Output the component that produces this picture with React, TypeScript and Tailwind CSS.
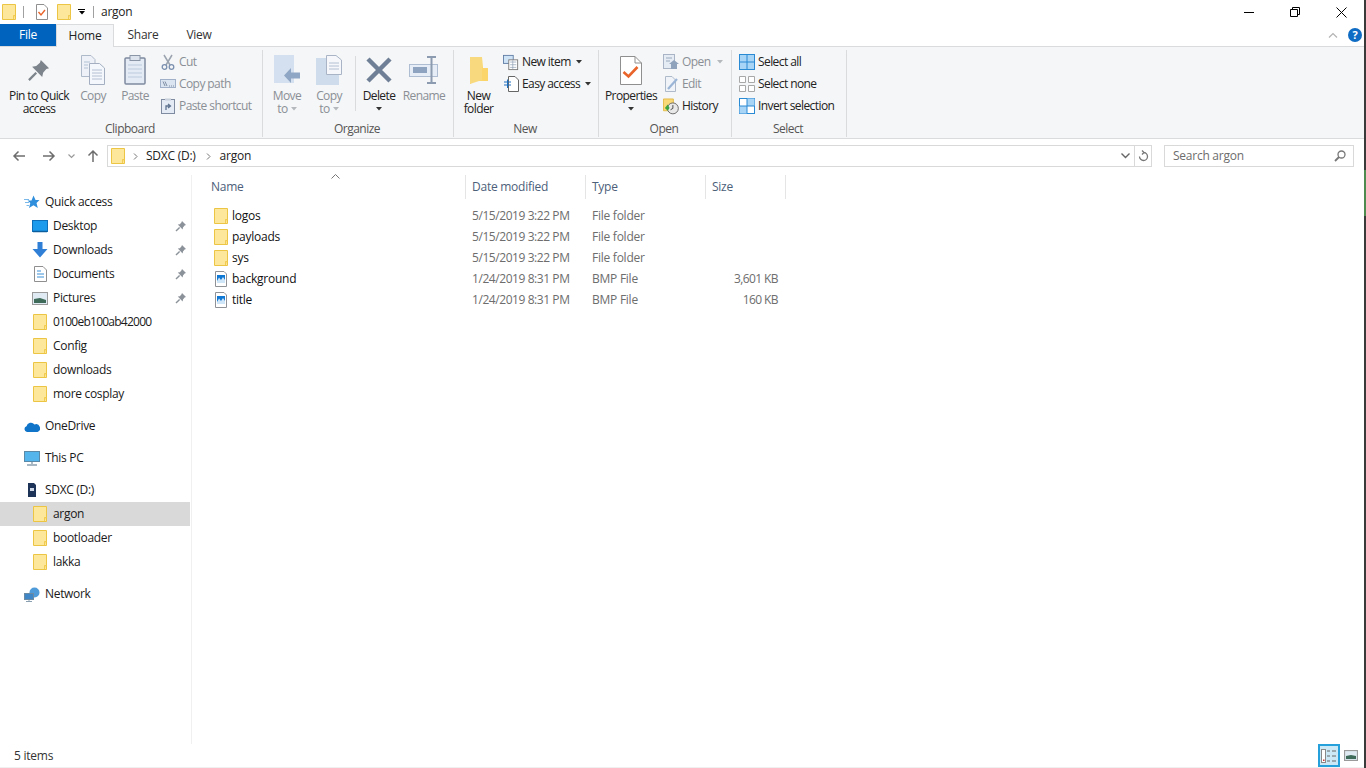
import React from "react";

const Folder = ({ s = 16 }: { s?: number }) => (
  <svg width={s} height={s} viewBox="0 0 16 16" className="shrink-0">
    <path d="M1.500 .5H14.500V15.500H1.500Z" fill="#fde79b" stroke="#edc544" />
    <path d="M12.500 15V11.500H14.500" fill="#fbdc78" stroke="#edc544" strokeWidth=".8" />
  </svg>
);

const Pin = () => (
  <svg width="12" height="12" viewBox="0 0 12 12" className="shrink-0">
    <path d="M7 1L11 5L9.600 5.600L8 7.400L7.600 9.400L2.800 4.600L4.800 4.200L6.400 2.400Z" fill="#8c9299" />
    <path d="M4.600 7.400L1 11" stroke="#8c9299" strokeWidth="1.400" />
  </svg>
);

const Bmp = () => (
  <svg width="16" height="16" viewBox="0 0 16 16" className="shrink-0">
    <path d="M2.500 .5H11L13.500 3V15.500H2.500Z" fill="#fff" stroke="#8f9398" />
    <rect x="4" y="4" width="8" height="8" fill="#0f78d4" />
    <path d="M4 10L6 6.500L8 9L10 6L12 9V12H4Z" fill="#cfe6f8" />
  </svg>
);

const Row = ({ name, date, type, size, bmp }: { name: string; date: string; type: string; size?: string; bmp?: boolean }) => (
  <div className="h-[21px] flex items-center text-[12px] leading-[21px]">
    <div className="w-[265px] pl-[13px] flex items-center gap-[3px] text-[#111]">
      {bmp ? <Bmp /> : <Folder />}
      <span>{name}</span>
    </div>
    <div className="w-[120px] pl-[7px] text-[#6d6d6d] tracking-[-0.43px]">{date}</div>
    <div className="w-[120px] pl-[7px] text-[#6d6d6d]">{type}</div>
    <div className="w-[73px] text-right text-[#6d6d6d] tracking-[-0.6px]">{size}</div>
  </div>
);

const Nav = ({ icon, label, sub, pin, active, mt, tight }: { icon: React.ReactNode; label: string; sub?: boolean; pin?: boolean; active?: boolean; mt?: boolean; tight?: boolean }) => (
  <div className={`h-[24px] w-[190px] flex items-center text-[12px] text-[#1a1a1a] gap-[5px] ${sub ? "pl-[32px]" : "pl-[24px]"} ${active ? "bg-[#d9d9d9]" : ""} ${mt ? "mt-[8px]" : ""}`}>
    <span className="w-[16px] h-[16px] flex items-center justify-center shrink-0">{icon}</span>
    <span className={`flex-1 ${tight ? "tracking-[-0.75px]" : "tracking-[-0.32px]"}`}>{label}</span>
    {pin && <span className="mr-[3px]"><Pin /></span>}
  </div>
);

const Caret = ({ c = "#333" }: { c?: string }) => (
  <svg width="6" height="4" viewBox="0 0 6 4" className="inline-block shrink-0"><path d="M0 0H6L3 3.500Z" fill={c} /></svg>
);

const Big = ({ w, icon, l1, l2, dim, caret, caretDim }: { w: number; icon: React.ReactNode; l1: string; l2?: string; dim?: boolean; caret?: boolean; caretDim?: boolean }) => (
  <div style={{ width: w }} className={`shrink-0 flex flex-col items-center text-[12px] leading-[13px] tracking-[-0.6px] ${dim ? "text-[#8a8f96]" : "text-[#222]"}`}>
    <div className="h-[36px] mt-[2px] flex items-center justify-center">{icon}</div>
    <div className="mt-[1px] whitespace-nowrap">{l1}</div>
    {l2 && (
      <div className="whitespace-nowrap flex items-center gap-[3px]">
        {l2}
        {caretDim && <Caret c="#b5b8bc" />}
      </div>
    )}
    {caret && <div className="h-[13px] flex items-center"><Caret /></div>}
  </div>
);

const Small = ({ icon, label, dim, caret, caretDim }: { icon: React.ReactNode; label: string; dim?: boolean; caret?: boolean; caretDim?: boolean }) => (
  <div className={`h-[22px] flex items-center gap-[3px] text-[12px] tracking-[-0.58px] whitespace-nowrap ${dim ? "text-[#8a8f96]" : "text-[#222]"}`}>
    <span className="w-[16px] h-[16px] flex items-center justify-center shrink-0">{icon}</span>
    <span>{label}</span>
    {caret && <span className="ml-[2px] flex"><Caret /></span>}
    {caretDim && <span className="ml-[4px] flex"><Caret c="#b5b8bc" /></span>}
  </div>
);

const Group = ({ w, label, children }: { w: number; label: string; children: React.ReactNode }) => (
  <div style={{ width: w }} className="shrink-0 h-[87px] border-r border-[#dadbdc] flex flex-col">
    <div className="h-[71px] flex">{children}</div>
    <div className="text-center text-[12px] leading-[16px] text-[#555] tracking-[-0.5px] pr-[2px]">{label}</div>
  </div>
);

const Check = () => (
  <svg width="22" height="29" viewBox="0 0 22 29">
    <path d="M.5 .5H15L21.500 7V28.500H.5Z" fill="#fff" stroke="#8f8f8f" />
    <path d="M15 .5V7H21.500" fill="none" stroke="#8f8f8f" />
    <path d="M3.500 16L8.500 20.500L17.500 11" fill="none" stroke="#e9642a" strokeWidth="2.600" />
  </svg>
);

const Pages = () => (
  <svg width="26" height="30" viewBox="0 0 26 30">
    <path d="M1.500 .5H11L15 4.500V21.500H1.500Z" fill="#eef2f8" stroke="#aeb9c9" />
    <path d="M9.500 8.500H19.500L24.500 13V29.500H9.500Z" fill="#f4f7fb" stroke="#a4b0c2" />
    <path d="M4 7H10M4 10H8M4 13H8M12 15H22M12 18H22M12 21H22M12 24H22" stroke="#b3c0d4" />
  </svg>
);

const FolderPages = () => (
  <svg width="26" height="30" viewBox="0 0 26 30">
    <rect x="0" y="3" width="23" height="27" fill="#cfdcec" />
    <path d="M10.500 .5H20L25.500 5V19.500H10.500Z" fill="#f5f7fb" stroke="#a9b5c6" />
    <path d="M13 8H23M13 11H23M13 14H23" stroke="#b3c0d4" />
  </svg>
);

export default function App() {
  return (
    <div className="w-[1366px] h-[768px] flex overflow-hidden bg-white font-['Open_Sans','Noto_Sans',sans-serif] tracking-[-0.25px]">
      <div className="w-[1364px] h-[768px] relative flex flex-col shrink-0">
        {/* title bar */}
        <div className="h-[24px] flex items-center shrink-0">
          <span className="ml-[1px]"><Folder /></span>
          <span className="ml-[6px] w-px h-[12px] bg-[#a0a0a0]" />
          <span className="ml-[11px]">
            <svg width="14" height="16" viewBox="0 0 14 16"><path d="M1.500 .5H9L12.500 4V15.500H1.500Z" fill="#fff" stroke="#8f8f8f" /><path d="M3.500 8L6 11L10 6" fill="none" stroke="#e9642a" strokeWidth="1.400" /></svg>
          </span>
          <span className="ml-[7px]"><Folder /></span>
          <span className="ml-[6px] flex flex-col items-center gap-[1px]"><span className="w-[7px] h-px bg-black" /><Caret c="#000" /></span>
          <span className="ml-[8px] w-px h-[12px] bg-[#a0a0a0]" />
          <span className="ml-[7px] text-[12px] text-[#222]">argon</span>
          <div className="ml-auto flex items-center">
            <div className="w-[46px] flex justify-center"><span className="w-[10px] h-px bg-black" /></div>
            <div className="w-[46px] flex justify-center">
              <svg width="10" height="10" viewBox="0 0 10 10"><path d="M.5 2.500H7.500V9.500H.5ZM2.500 2.500V.5H9.500V7.500H7.500" fill="none" stroke="#000" /></svg>
            </div>
            <div className="w-[46px] flex justify-center">
              <svg width="11" height="11" viewBox="0 0 11 11"><path d="M.5 .5L10.500 10.500M10.500 .5L.5 10.500" stroke="#000" /></svg>
            </div>
          </div>
        </div>

        {/* tabs */}
        <div className="h-[23px] flex text-[12px] border-b border-[#dadbdc] shrink-0 relative">
          <div className="w-[56px] h-[22px] bg-[#0063be] text-white flex items-center justify-center">File</div>
          <div className="w-[58px] h-[23px] bg-[#f5f6f7] border-x border-t border-[#dadbdc] flex items-center justify-center text-[#222] z-10">Home</div>
          <div className="w-[58px] flex items-center justify-center text-[#333]">Share</div>
          <div className="w-[54px] flex items-center justify-center text-[#333]">View</div>
          <div className="ml-auto flex items-center gap-[10px] pr-[2px] h-[22px]">
            <svg width="10" height="6" viewBox="0 0 10 6"><path d="M1 5.500L5 1.500L9 5.500" fill="none" stroke="#b3b3b3" strokeWidth="1.200" /></svg>
            <span className="w-[14px] h-[14px] rounded-full bg-[#0f6cc4] text-white text-[11px] font-bold flex items-center justify-center">?</span>
          </div>
        </div>

        {/* ribbon */}
        <div className="h-[92px] bg-[#f5f6f7] border-b border-[#dadbdc] flex pt-[3px] shrink-0">
          <Group w={263} label="Clipboard">
            <Big w={78} l1="Pin to Quick" l2="access" icon={
              <svg width="22" height="22" viewBox="0 0 24 24"><path d="M14 1L23 10L20 11L16.500 15L15.500 19.500L4.500 8.500L9 7.500L13 4Z" fill="#7d848c" /><path d="M9 15L1 23" stroke="#7d848c" strokeWidth="2.500" /></svg>
            } />
            <Big w={30} dim l1="Copy" icon={<Pages />} />
            <Big w={54} dim l1="Paste" icon={
              <svg width="22" height="30" viewBox="0 0 22 30"><rect x="1" y="3" width="20" height="26" rx="1" fill="#e4ebf5" stroke="#7e8ba0" strokeWidth="1.500" /><rect x="6" y="0.500" width="10" height="5" fill="#dde3ec" stroke="#8a96a8" /><path d="M4 10H18M4 14H18M4 18H18M4 22H18" stroke="#bccade" /></svg>
            } />
            <div className="flex flex-col -ml-[2px] mt-[1px]">
              <Small dim label="Cut" icon={
                <svg width="14" height="16" viewBox="0 0 14 16"><path d="M3 1L9 11M11 1L5 11" stroke="#9aa3af" strokeWidth="1.500" /><circle cx="3.500" cy="13" r="2.300" fill="none" stroke="#7a90b0" strokeWidth="1.300" /><circle cx="10.500" cy="13" r="2.300" fill="none" stroke="#7a90b0" strokeWidth="1.300" /></svg>
              } />
              <Small dim label="Copy path" icon={
                <svg width="16" height="10" viewBox="0 0 16 10"><rect x=".5" y=".5" width="15" height="8" fill="#dbe4f1" stroke="#9fb0c8" /><path d="M3 2.500L5 7M5 2.500L7 7M9 7H10M11 7H12M13 7H14" stroke="#68788f" strokeWidth=".8" /></svg>
              } />
              <Small dim label="Paste shortcut" icon={
                <svg width="14" height="16" viewBox="0 0 14 16"><rect x=".5" y="1.500" width="13" height="14" fill="#e4ebf5" stroke="#7e8ba0" /><rect x="4" y=".5" width="6" height="2" fill="#c8d0db" /><path d="M5 12V8H9M7 6L9.500 8L7 10" fill="none" stroke="#5f7390" strokeWidth="1.300" /></svg>
              } />
            </div>
          </Group>

          <Group w={191} label="Organize">
            <Big w={48} dim l1="Move" l2="to" caretDim icon={
              <svg width="26" height="30" viewBox="0 0 26 30"><rect x="0" y="0" width="20" height="28" fill="#d4e0ef" /><path d="M10 20.500L17 13V17.500H26V23.500H17V28Z" fill="#8fa6c4" /></svg>
            } />
            <Big w={36} dim l1="Copy" l2="to" caretDim icon={<FolderPages />} />
            <div className="w-px h-[55px] bg-[#dadbdc] ml-[8px] mt-[6px]" />
            <Big w={46} l1="Delete" caret icon={
              <svg width="26" height="26" viewBox="0 0 26 26"><path d="M2 2L24 24M24 2L2 24" stroke="#6e7f96" strokeWidth="4.500" /></svg>
            } />
            <Big w={44} dim l1="Rename" icon={
              <svg width="30" height="28" viewBox="0 0 30 28"><rect x=".5" y="8.500" width="28" height="12" fill="#e6edf6" stroke="#aebdd1" /><rect x="4" y="11" width="14" height="6" fill="#8ea3bf" /><path d="M18 1H27M22.500 1V27M18 27H27" stroke="#8c9bb0" strokeWidth="2" /></svg>
            } />
          </Group>

          <Group w={145} label="New">
            <Big w={49} l1="New" l2="folder" icon={
              <svg width="20" height="28" viewBox="0 0 20 28"><path d="M1 1H13L14 12H19V25H5L1 28Z" fill="#fcd56a" /><path d="M1 1H13V24L1 28Z" fill="#f9d97e" /></svg>
            } />
            <div className="flex flex-col mt-[1px]">
              <Small label="New item" caret icon={
                <svg width="18" height="17" viewBox="0 0 18 17"><rect x=".5" y=".5" width="11" height="9" fill="#cfe3f6" stroke="#5d7ba3" /><rect x="6.500" y="5.500" width="10" height="11" fill="#fff" stroke="#777" /><path d="M8 8H15M8 11H15M8 14H15M11 6V16" stroke="#8ea0b5" strokeWidth=".8" /></svg>
              } />
              <Small label="Easy access" caret icon={
                <svg width="15" height="16" viewBox="0 0 15 16"><path d="M4.500 .5H11L14.500 4V15.500H4.500Z" fill="#fff" stroke="#666" /><path d="M0 6H7M0 9H7M3.500 3.500V12" stroke="#1f6fc0" strokeWidth="1" /></svg>
              } />
            </div>
          </Group>

          <Group w={133} label="Open">
            <Big w={64} l1="Properties" caret icon={<Check />} />
            <div className="flex flex-col mt-[1px]">
              <Small dim label="Open" caretDim icon={
                <svg width="16" height="16" viewBox="0 0 16 16"><rect x=".5" y=".5" width="11" height="14" fill="#e6ecf4" stroke="#a9b5c6" /><path d="M3 4H9M3 7H7" stroke="#9aa9bd" /><path d="M8 15V10H6L11 6L16 10H14V15Z" fill="#8fa3bd" /></svg>
              } />
              <Small dim label="Edit" icon={
                <svg width="15" height="16" viewBox="0 0 15 16"><path d="M1.500 .5H8L11.500 4V15.500H1.500Z" fill="#f0f4f9" stroke="#aeb9c9" /><path d="M4 13L13 3" stroke="#9bb5d6" strokeWidth="2.200" /></svg>
              } />
              <Small label="History" icon={
                <svg width="17" height="17" viewBox="0 0 17 17"><path d="M.5 .5H11V13H.5Z" fill="#f8d877" stroke="#e2bb45" /><circle cx="10.500" cy="10.500" r="5.800" fill="#e8e8e8" stroke="#666" /><path d="M10.500 7V10.500L8 12" stroke="#444" fill="none" /><path d="M2 10L5 6.500L7 10L5 13Z" fill="#3ea33e" /></svg>
              } />
            </div>
          </Group>

          <Group w={115} label="Select">
            <div className="flex flex-col ml-[7px] mt-[1px]">
              <Small label="Select all" icon={
                <svg width="16" height="16" viewBox="0 0 16 16"><rect x=".5" y=".5" width="15" height="15" fill="#a8d4f5" stroke="#2a8ad4" /><path d="M8 .5V15.500M.5 8H15.500" stroke="#2a8ad4" /></svg>
              } />
              <Small label="Select none" icon={
                <svg width="16" height="16" viewBox="0 0 16 16"><path d="M.5 .5H6.500V6.500H.5ZM9.500 .5H15.500V6.500H9.500ZM.5 9.500H6.500V15.500H.5ZM9.500 9.500H15.500V15.500H9.500Z" fill="#fff" stroke="#a8a8a8" /></svg>
              } />
              <Small label="Invert selection" icon={
                <svg width="16" height="16" viewBox="0 0 16 16"><rect x=".5" y=".5" width="15" height="15" fill="#fff" stroke="#2a8ad4" /><rect x="8" y=".5" width="7.500" height="7.500" fill="#a8d4f5" /><rect x=".5" y="8" width="7.500" height="7.500" fill="#a8d4f5" /><path d="M8 .5V15.500M.5 8H15.500" stroke="#2a8ad4" /></svg>
              } />
            </div>
          </Group>
        </div>

        {/* address row */}
        <div className="h-[34px] flex items-center shrink-0">
          <div className="w-[107px] flex items-center pl-[12px]">
            <svg width="14" height="12" viewBox="0 0 14 12"><path d="M13 6H2M6.500 1.500L2 6L6.500 10.500" fill="none" stroke="#6d6d6d" strokeWidth="1.500" /></svg>
            <svg className="ml-[16px]" width="14" height="12" viewBox="0 0 14 12"><path d="M1 6H12M7.500 1.500L12 6L7.500 10.500" fill="none" stroke="#6d6d6d" strokeWidth="1.500" /></svg>
            <svg className="ml-[12px]" width="7" height="5" viewBox="0 0 7 5"><path d="M.5 .5L3.500 3.500L6.500 .5" fill="none" stroke="#9a9a9a" strokeWidth="1.200" /></svg>
            <svg className="ml-[12px]" width="12" height="14" viewBox="0 0 12 14"><path d="M6 13V2M1.500 6.500L6 2L10.500 6.500" fill="none" stroke="#6d6d6d" strokeWidth="1.500" /></svg>
          </div>
          <div className="w-[1045px] h-[22px] border border-[#d9d9d9] flex items-center text-[12px] text-[#222]">
            <span className="ml-[2px]"><Folder /></span>
            <svg className="ml-[7px]" width="5" height="7" viewBox="0 0 5 7"><path d="M1 .5L4 3.500L1 6.500" fill="none" stroke="#777" /></svg>
            <span className="ml-[8px]">SDXC (D:)</span>
            <svg className="ml-[10px]" width="5" height="7" viewBox="0 0 5 7"><path d="M1 .5L4 3.500L1 6.500" fill="none" stroke="#777" /></svg>
            <span className="ml-[9px]">argon</span>
            <div className="ml-auto w-[17px] flex justify-center">
              <svg width="9" height="6" viewBox="0 0 9 6"><path d="M.5 .5L4.500 4.500L8.500 .5" fill="none" stroke="#666" strokeWidth="1.400" /></svg>
            </div>
            <div className="w-[17px] h-[20px] border-l border-[#d9d9d9] flex items-center justify-center">
              <svg width="11" height="12" viewBox="0 0 11 12"><path d="M5.500 2.500A4 4 0 1 1 1.500 6.500M4 .5L6 2.500L4 4.500" fill="none" stroke="#777" strokeWidth="1.300" /></svg>
            </div>
          </div>
          <div className="ml-[12px] w-[190px] h-[22px] border border-[#d9d9d9] flex items-center pl-[8px] text-[12px] text-[#6d6d6d]">
            <span>Search argon</span>
            <svg className="ml-auto mr-[7px]" width="12" height="12" viewBox="0 0 12 12"><circle cx="7.500" cy="4.500" r="3.500" fill="none" stroke="#777" strokeWidth="1.300" /><path d="M5 7L1 11" stroke="#777" strokeWidth="1.800" /></svg>
          </div>
        </div>

        {/* main */}
        <div className="flex-1 flex min-h-0">
          <div className="w-[192px] shrink-0 mt-[2px] pt-[15px] border-r border-[#f0f0f0]">
            <Nav label="Quick access" icon={<svg width="16" height="16" viewBox="0 0 16 16"><path d="M9.500 1.500L11.500 6H15.500L12.500 9L13.800 14L9.500 11.200L5 14L6.300 9L3.500 6.500H7.500Z" fill="#2f8fdc" /><path d="M0 5.500H5M1 8.500H5M2.500 11.500H5" stroke="#7ab8ea" /></svg>} />
            <Nav sub pin label="Desktop" icon={<svg width="16" height="13" viewBox="0 0 16 13"><rect x=".5" y=".5" width="15" height="11" fill="#1c9bec" stroke="#0e6fb8" /><path d="M1 11.500H15" stroke="#0b5d9c" strokeWidth="1.500" /></svg>} />
            <Nav sub pin label="Downloads" icon={<svg width="16" height="16" viewBox="0 0 16 16"><path d="M5.500 0H10.500V7H15.500L8 15.500L.5 7H5.500Z" fill="#2f7fd6" /></svg>} />
            <Nav sub pin label="Documents" icon={<svg width="13" height="16" viewBox="0 0 13 16"><path d="M.5 .5H9L12.500 4V15.500H.5Z" fill="#fff" stroke="#8f8f8f" /><path d="M3 5H7M3 8H10M3 11H10" stroke="#3a8fd6" /></svg>} />
            <Nav sub pin label="Pictures" icon={<svg width="16" height="13" viewBox="0 0 16 13"><rect x=".5" y=".5" width="15" height="12" fill="#dfeaf2" stroke="#9a9a9a" /><path d="M2 7L8 6L14 8V11H2Z" fill="#3e6b5a" /></svg>} />
            <Nav sub tight label="0100eb100ab42000" icon={<Folder />} />
            <Nav sub label="Config" icon={<Folder />} />
            <Nav sub label="downloads" icon={<Folder />} />
            <Nav sub label="more cosplay" icon={<Folder />} />
            <Nav mt label="OneDrive" icon={<svg width="16" height="11" viewBox="0 0 16 11"><path d="M3 11A3 3 0 0 1 2.500 5.200A4.500 4.500 0 0 1 10.500 3.500A3.500 3.500 0 0 1 13.500 11Z" fill="#1074c9" /></svg>} />
            <Nav mt label="This PC" icon={<svg width="16" height="15" viewBox="0 0 16 15"><rect x=".5" y=".5" width="15" height="10" fill="#53b5ec" stroke="#5a89a8" /><path d="M8 11V13M3 14H13" stroke="#8aa0b0" strokeWidth="1.400" /></svg>} />
            <Nav mt label="SDXC (D:)" icon={<svg width="10" height="14" viewBox="0 0 10 14"><path d="M1 0H7L9 2V14H1Z" fill="#1d3358" /><rect x="3" y="5" width="4" height="3" fill="#cfd8e6" /></svg>} />
            <Nav sub active label="argon" icon={<Folder />} />
            <Nav sub label="bootloader" icon={<Folder />} />
            <Nav sub label="lakka" icon={<Folder />} />
            <Nav mt label="Network" icon={<svg width="16" height="15" viewBox="0 0 16 15"><circle cx="10.500" cy="5.500" r="5" fill="#4f9ad8" /><rect x=".5" y="6.500" width="9" height="6" fill="#3f86c6" stroke="#6a8aa4" /><path d="M5 13V14M2 14.500H8" stroke="#8aa0b0" /></svg>} />
          </div>

          <div className="flex-1">
            <div className="h-[24px] mt-[2px] ml-[12px] flex text-[12px] text-[#4c607a] relative">
              <div className="w-[262px] pl-[7px] border-r border-[#e5e5e5] flex items-center">Name</div>
              <div className="w-[120px] pl-[6px] border-r border-[#e5e5e5] flex items-center">Date modified</div>
              <div className="w-[120px] pl-[6px] border-r border-[#e5e5e5] flex items-center">Type</div>
              <div className="w-[80px] pl-[6px] border-r border-[#e5e5e5] flex items-center">Size</div>
              <svg className="absolute left-[127px] top-[-1px]" width="9" height="5" viewBox="0 0 9 5"><path d="M.5 4.500L4.500 .5L8.500 4.500" fill="none" stroke="#777" /></svg>
            </div>
            <div className="ml-[8px] mt-[6px]">
              <Row name="logos" date="5/15/2019 3:22 PM" type="File folder" />
              <Row name="payloads" date="5/15/2019 3:22 PM" type="File folder" />
              <Row name="sys" date="5/15/2019 3:22 PM" type="File folder" />
              <Row bmp name="background" date="1/24/2019 8:31 PM" type="BMP File" size="3,601 KB" />
              <Row bmp name="title" date="1/24/2019 8:31 PM" type="BMP File" size="160 KB" />
            </div>
          </div>
        </div>

        {/* status */}
        <div className="h-[24px] shrink-0 flex items-center text-[12px] text-[#333] bg-white border-b border-[#f0f0f0]">
          <span className="ml-[14px]">5 items</span>
          <div className="ml-auto mr-[2px] flex items-center">
            <div className="w-[22px] h-[23px] border-2 border-[#26a0da] bg-[#cbe8f6] flex items-center justify-center">
              <svg width="16" height="14" viewBox="0 0 16 14"><rect x=".5" y=".5" width="4" height="13" fill="#fff" stroke="#888" /><path d="M6 2H9M11 2H15M6 7H9M11 7H15M6 12H9M11 12H15" stroke="#666" /><rect x="2" y="10.500" width="1.500" height="1.500" fill="#c33" /></svg>
            </div>
            <div className="w-[22px] flex justify-center">
              <svg width="14" height="11" viewBox="0 0 14 11"><rect x=".5" y=".5" width="13" height="10" fill="#dfeaf2" stroke="#9a9a9a" strokeWidth="1.200" /><path d="M2 6L7 5L12 6V9H2Z" fill="#3e6b5a" /></svg>
            </div>
          </div>
        </div>
      </div>

      {/* sliver of the window behind */}
      <div className="w-[2px] h-[768px] shrink-0 flex flex-col bg-[#3a3a3a]">
        <div className="h-[46px] mt-[170px] bg-[#4f8a4f]" />
      </div>
    </div>
  );
}
